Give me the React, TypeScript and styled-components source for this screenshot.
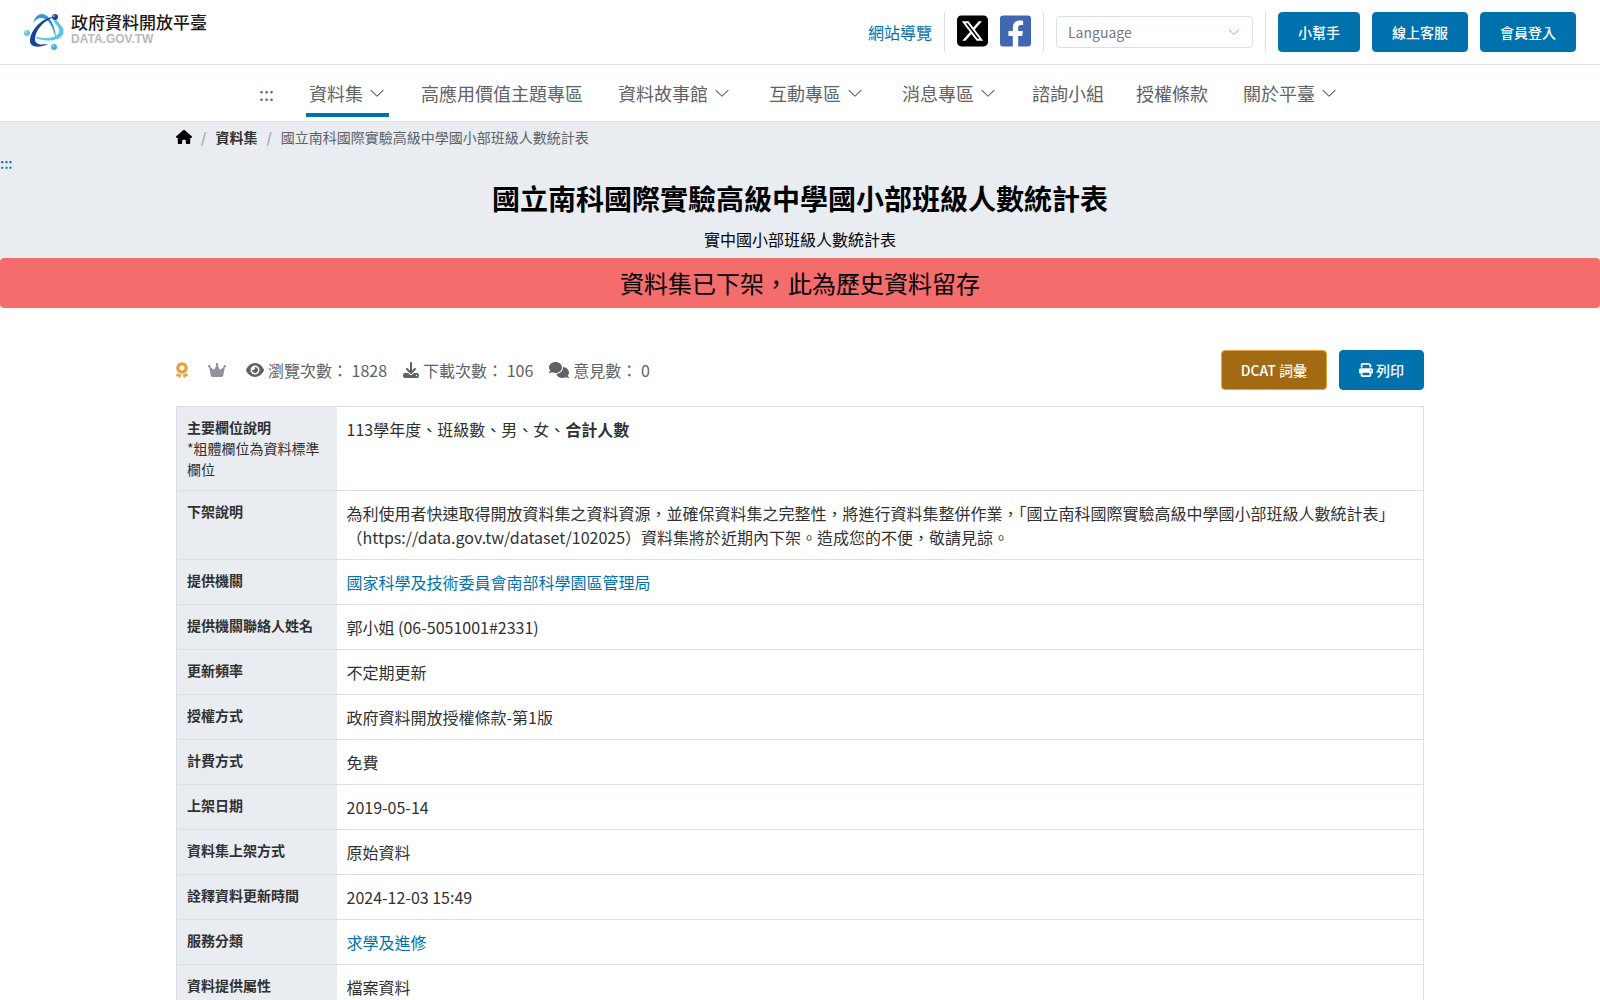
import React from "react";
import styled, { createGlobalStyle, css } from "styled-components";
import { FaFacebookSquare } from "react-icons/fa";
import {
  FaAward,
  FaComments,
  FaCrown,
  FaDownload,
  FaEye,
  FaHouse,
  FaPrint,
  FaSquareXTwitter,
} from "react-icons/fa6";

const color = {
  primary: "#0071ad",
  text: "#303133",
  muted: "#606266",
  faint: "#909399",
  border: "#dcdfe6",
  panel: "#e9ecf1",
  danger: "#f56c6c",
  amber: "#e6a23c",
  brown: "#a36a14",
};

const GlobalStyle = createGlobalStyle`
  *, *::before, *::after { box-sizing: border-box; }
  body {
    margin: 0;
    background: #fff;
    color: ${color.text};
    font-family: "Noto Sans CJK TC", "Noto Sans", sans-serif;
    font-size: 16px;
    line-height: 24px;
    font-kerning: normal;
    text-rendering: optimizeLegibility;
  }
  button, select { font-family: inherit; }
  a { color: inherit; text-decoration: none; }
`;

const TopBar = styled.header`
  display: flex;
  align-items: center;
  justify-content: space-between;
  height: 65px;
  padding: 0 24px;
  border-bottom: 1px solid ${color.border};
`;

const Logo = styled.a`
  display: flex;
  align-items: center;
  gap: 7px;
`;

const LogoText = styled.span`
  display: flex;
  flex-direction: column;
  padding-bottom: 6px;
`;

const LogoName = styled.span`
  color: #231815;
  font-size: 17px;
  font-weight: 500;
  line-height: 20px;
`;

const LogoDomain = styled.span`
  color: #b9b9ba;
  font-family: "Liberation Sans", Arial, sans-serif;
  font-size: 12px;
  font-weight: 700;
  line-height: 14px;
`;

const Tools = styled.div`
  display: flex;
  align-items: center;
  gap: 12px;
`;

const Divider = styled.span`
  width: 1px;
  height: 40px;
  background: ${color.border};
`;

const TextLink = styled.a`
  color: ${color.primary};
`;

const SocialLink = styled.a<{ $tone: string }>`
  display: flex;
  padding-bottom: 2px;
  color: ${(p) => p.$tone};
  svg {
    width: 31px;
    height: 36px;
  }
`;

const SelectWrap = styled.label`
  display: grid;
  align-items: center;
  width: 197px;
  > * { grid-area: 1 / 1; }
  svg {
    justify-self: end;
    margin-right: 12px;
    color: #a8abb2;
    pointer-events: none;
  }
`;

const LanguageSelect = styled.select`
  appearance: none;
  width: 100%;
  height: 32px;
  padding: 0 11px;
  border: 1px solid ${color.border};
  border-radius: 4px;
  background: #fff;
  color: #767985;
  font-size: 14px;
`;

const Button = styled.button<{ $brown?: boolean }>`
  display: inline-flex;
  align-items: center;
  gap: 3px;
  height: 40px;
  padding: 0 19px;
  border: 1px solid ${(p) => (p.$brown ? color.amber : color.primary)};
  border-radius: 4px;
  background: ${(p) => (p.$brown ? color.brown : color.primary)};
  color: #fff;
  font-size: 14px;
  font-weight: 500;
  line-height: 20px;
  cursor: pointer;
`;

const NavBar = styled.nav`
  display: flex;
  justify-content: center;
  gap: 32px;
  height: 57px;
  padding-top: 4px;
  border-bottom: 1px solid ${color.border};
  color: ${color.muted};
  font-size: 18px;
`;

const NavItem = styled.a<{ $menu?: boolean; $active?: boolean }>`
  display: flex;
  align-items: center;
  gap: 5px;
  height: 48px;
  padding-top: 4px;
  border-bottom: 4px solid ${(p) => (p.$active ? color.primary : "transparent")};
  ${(p) =>
    p.$menu &&
    css`
      padding-left: 3px;
      padding-right: 3px;
    `}
`;

const Hero = styled.section`
  background: ${color.panel};
  color: #000;
  text-align: center;
`;

const Container = styled.div`
  width: 78%;
  margin: 0 auto;
`;

const Breadcrumb = styled(Container)`
  display: flex;
  align-items: center;
  gap: 9px;
  height: 31px;
  padding-bottom: 2px;
  color: ${color.muted};
  font-size: 14px;
`;

const Slash = styled.span`
  color: #a8abb2;
  font-weight: 700;
`;

const CrumbLink = styled.a`
  display: flex;
  color: ${color.text};
  font-weight: 700;
`;

const HomeLink = styled(CrumbLink)`
  color: #000;
`;

const Anchor = styled.a`
  display: block;
  color: ${color.primary};
  font-size: 14px;
  font-weight: 500;
  line-height: 21px;
  text-align: left;
`;

const Title = styled.h1`
  margin: 0;
  font-size: 28px;
  font-weight: 700;
  line-height: 48px;
`;

const Subtitle = styled.p`
  margin: 0;
  padding: 5px 0 7px;
`;

const Alert = styled.div`
  border-radius: 4px;
  background: ${color.danger};
  color: #000;
  font-size: 24px;
  line-height: 50px;
  text-align: center;
`;

const StatusRow = styled.div`
  display: flex;
  align-items: center;
  justify-content: space-between;
  padding: 42px 0 16px;
  color: ${color.muted};
`;

const Group = styled.div<{ $gap: number }>`
  display: flex;
  align-items: center;
  gap: ${(p) => p.$gap}px;
`;

const Stat = styled.span`
  display: flex;
  align-items: center;
  gap: 4px;
`;

const Glyph = styled.span<{ $w: number; $tone?: string }>`
  display: flex;
  color: ${(p) => p.$tone || "inherit"};
  svg {
    width: ${(p) => p.$w}px;
    height: 16px;
  }
`;

const Table = styled.table`
  width: 100%;
  border: 1px solid ${color.border};
  border-collapse: collapse;
`;

const Label = styled.th`
  width: 160px;
  padding: 10px;
  border-top: 1px solid ${color.border};
  background: ${color.panel};
  font-size: 14px;
  font-weight: 700;
  line-height: 21px;
  text-align: left;
  vertical-align: top;
`;

const Note = styled.span`
  display: block;
  font-weight: 400;
`;

const Value = styled.td`
  padding: 10px;
  border-top: 1px solid ${color.border};
  vertical-align: top;
`;

const Chevron = ({ size }: { size: number }) => (
  <svg width={size} height={size} viewBox="0 0 1024 1024" fill="currentColor" aria-hidden="true">
    <path d="M831.872 340.864 512 652.672 192.128 340.864a30.592 30.592 0 0 0-42.752 0 29.12 29.12 0 0 0 0 41.6L489.664 714.24a32 32 0 0 0 44.672 0l340.288-331.712a29.12 29.12 0 0 0 0-41.728 30.592 30.592 0 0 0-42.752 0z" />
  </svg>
);

const LogoMark = () => (
  <svg width="40" height="38" viewBox="0 0 40 38" aria-hidden="true">
    <path d="M9 10C11 4 14 1 18 1C25 1 32 13 32 27C30 17 26 8 21 6C17 4 13 5 9 10Z" fill="#3496d8" />
    <path d="M30 4C33 9 40 13 39.500 19C39 26 28 29 20 27C16 27 13 26 11 23C19 27 34 25 35 19C36 16 33 12 30 9Z" fill="#5cc6ea" />
    <path d="M30 4C22 3 6 15 6 28C6 35 16 35 24 31C17 32 11 32 11 26C11 18 19 8 30 4Z" fill="#17449a" />
    <circle cx="31" cy="4" r="3" fill="#17449a" />
    <circle cx="30" cy="3" r="1" fill="#8fb4e0" />
    <circle cx="3" cy="20" r="3" fill="#5cc6ea" />
    <circle cx="2" cy="19" r="1" fill="#c5ebf8" />
    <circle cx="30" cy="34" r="3" fill="#3fb0e4" />
    <circle cx="29" cy="33" r="1" fill="#b0ddf4" />
  </svg>
);

const navItems = [
  { text: ":::" },
  { text: "資料集", menu: true, active: true },
  { text: "高應用價值主題專區" },
  { text: "資料故事館", menu: true },
  { text: "互動專區", menu: true },
  { text: "消息專區", menu: true },
  { text: "諮詢小組" },
  { text: "授權條款" },
  { text: "關於平臺", menu: true },
];

const rows: { label: string; note?: string; value: React.ReactNode }[] = [
  {
    label: "主要欄位說明",
    note: "*粗體欄位為資料標準欄位",
    value: (
      <>
        113學年度、班級數、男、女、<b>合計人數</b>
      </>
    ),
  },
  {
    label: "下架說明",
    value:
      "為利使用者快速取得開放資料集之資料資源，並確保資料集之完整性，將進行資料集整併作業，「國立南科國際實驗高級中學國小部班級人數統計表」（https://data.gov.tw/dataset/102025）資料集將於近期內下架。造成您的不便，敬請見諒。",
  },
  { label: "提供機關", value: <TextLink href="#agency">國家科學及技術委員會南部科學園區管理局</TextLink> },
  { label: "提供機關聯絡人姓名", value: "郭小姐 (06-5051001#2331)" },
  { label: "更新頻率", value: "不定期更新" },
  { label: "授權方式", value: "政府資料開放授權條款-第1版" },
  { label: "計費方式", value: "免費" },
  { label: "上架日期", value: "2019-05-14" },
  { label: "資料集上架方式", value: "原始資料" },
  { label: "詮釋資料更新時間", value: "2024-12-03 15:49" },
  { label: "服務分類", value: <TextLink href="#category">求學及進修</TextLink> },
  { label: "資料提供屬性", value: "檔案資料" },
];

export default function App() {
  return (
    <>
      <GlobalStyle />
      <TopBar>
        <Logo href="#home">
          <LogoMark />
          <LogoText>
            <LogoName>政府資料開放平臺</LogoName>
            <LogoDomain>DATA.GOV.TW</LogoDomain>
          </LogoText>
        </Logo>
        <Tools>
          <TextLink href="#sitemap">網站導覽</TextLink>
          <Divider />
          <SocialLink href="#x" $tone="#000" aria-label="X">
            <FaSquareXTwitter />
          </SocialLink>
          <SocialLink href="#facebook" $tone="#4267b2" aria-label="Facebook">
            <FaFacebookSquare />
          </SocialLink>
          <Divider />
          <SelectWrap>
            <LanguageSelect aria-label="Language">
              <option>Language</option>
            </LanguageSelect>
            <Chevron size={14} />
          </SelectWrap>
          <Divider />
          <Button type="button">小幫手</Button>
          <Button type="button">線上客服</Button>
          <Button type="button">會員登入</Button>
        </Tools>
      </TopBar>
      <NavBar>
        {navItems.map((item) => (
          <NavItem key={item.text} href="#nav" $menu={item.menu} $active={item.active}>
            {item.text}
            {item.menu && <Chevron size={18} />}
          </NavItem>
        ))}
      </NavBar>
      <main>
        <Hero>
          <Breadcrumb>
            <HomeLink href="#home" aria-label="首頁">
              <FaHouse size={16} />
            </HomeLink>
            <Slash>/</Slash>
            <CrumbLink href="#datasets">資料集</CrumbLink>
            <Slash>/</Slash>
            <span>國立南科國際實驗高級中學國小部班級人數統計表</span>
          </Breadcrumb>
          <Anchor href="#content">:::</Anchor>
          <Title>國立南科國際實驗高級中學國小部班級人數統計表</Title>
          <Subtitle>實中國小部班級人數統計表</Subtitle>
        </Hero>
        <Alert role="alert">資料集已下架，此為歷史資料留存</Alert>
        <Container>
          <StatusRow>
            <Group $gap={20}>
              <Glyph $w={12} $tone={color.amber}>
                <FaAward />
              </Glyph>
              <Glyph $w={18} $tone={color.faint}>
                <FaCrown />
              </Glyph>
              <Group $gap={16}>
                <Stat>
                  <Glyph $w={18}>
                    <FaEye />
                  </Glyph>
                  瀏覽次數： 1828
                </Stat>
                <Stat>
                  <Glyph $w={16}>
                    <FaDownload />
                  </Glyph>
                  下載次數： 106
                </Stat>
                <Stat>
                  <Glyph $w={20}>
                    <FaComments />
                  </Glyph>
                  意見數： 0
                </Stat>
              </Group>
            </Group>
            <Group $gap={12}>
              <Button type="button" $brown>
                DCAT 詞彙
              </Button>
              <Button type="button">
                <FaPrint size={14} />
                列印
              </Button>
            </Group>
          </StatusRow>
          <Table>
            <tbody>
              {rows.map((row) => (
                <tr key={row.label}>
                  <Label scope="row">
                    {row.label}
                    {row.note && <Note>{row.note}</Note>}
                  </Label>
                  <Value>{row.value}</Value>
                </tr>
              ))}
            </tbody>
          </Table>
        </Container>
      </main>
    </>
  );
}
